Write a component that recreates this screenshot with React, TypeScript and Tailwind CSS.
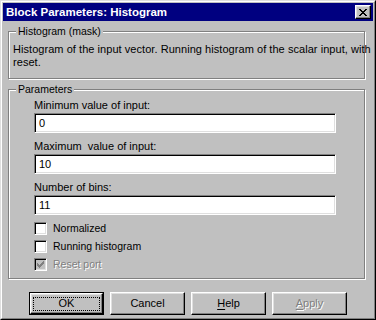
const font = "font-['Liberation_Sans',Arial,sans-serif]"

const sunken =
  'border border-t-[#808080] border-l-[#808080] border-b-white border-r-white shadow-[inset_1px_1px_0_#000,inset_-1px_-1px_0_#dfdfdf]'

const raised =
  'border border-t-white border-l-white border-b-black border-r-black shadow-[inset_-1px_-1px_0_#808080,inset_1px_1px_0_#dfdfdf]'

function Check({ color }: { color: string }) {
  return (
    <svg width="7" height="7" viewBox="0 0 7 7" shapeRendering="crispEdges" fill={color}>
      <path d="M6 0h1v3h-1zM5 1h1v3h-1zM4 2h1v3h-1zM3 3h1v3h-1zM2 4h1v3h-1zM1 3h1v3h-1zM0 2h1v3h-1z" />
    </svg>
  )
}

function GroupBox({ title, className, children }: { title: string; className: string; children: React.ReactNode }) {
  return (
    <div className={`relative ml-[5px] w-[357px] border border-[#808080] shadow-[inset_1px_1px_0_#fff,1px_1px_0_#fff] ${className}`}>
      <span className="absolute -top-[7px] left-[7px] bg-[#c0c0c0] px-[2px] text-[10.5px] leading-[13px]">{title}</span>
      {children}
    </div>
  )
}

function Field({ label, value, className }: { label: string; value: string; className: string }) {
  return (
    <div className={className}>
      <div className="whitespace-pre text-[11px] leading-[13px]">{label}</div>
      <div className={`mt-[1px] h-[20px] w-[302px] bg-white pl-[4px] text-[11px] leading-[18px] ${sunken}`}>{value}</div>
    </div>
  )
}

function CheckRow({ label, checked, disabled }: { label: string; checked?: boolean; disabled?: boolean }) {
  return (
    <div className="flex h-[18px] items-start gap-[6px] pt-[2px]">
      <div className={`flex h-[13px] w-[13px] items-center justify-center ${sunken} ${disabled ? 'bg-[#c0c0c0]' : 'bg-white'}`}>
        {checked && <Check color={disabled ? '#808080' : '#000'} />}
      </div>
      <span className={`text-[10.5px] leading-[13px] ${disabled ? 'text-[#808080] [text-shadow:1px_1px_0_#fff]' : ''}`}>{label}</span>
    </div>
  )
}

function Button({ children, disabled, isDefault }: { children: React.ReactNode; disabled?: boolean; isDefault?: boolean }) {
  const text = disabled ? 'text-[#808080] [text-shadow:1px_1px_0_#fff]' : 'text-black'
  if (isDefault) {
    return (
      <div className="h-[23px] w-[75px] border border-black">
        <div className={`flex h-full w-full items-center justify-center ${raised}`}>
          <div className="flex h-[14px] w-[67px] items-center justify-center border border-dotted border-black text-[11px]">{children}</div>
        </div>
      </div>
    )
  }
  return (
    <div className={`flex h-[23px] w-[75px] items-center justify-center text-[11px] ${raised} ${text}`}>{children}</div>
  )
}

export default function App() {
  return (
    <div className={`${font} h-[320px] w-[376px] border border-t-[#dfdfdf] border-l-[#dfdfdf] border-b-black border-r-black bg-[#c0c0c0] text-black`}>
      <div className="h-full w-full border border-t-white border-l-white border-b-[#808080] border-r-[#808080] p-[1px]">
        <div className="flex h-[18px] items-center justify-between bg-[#000080] pl-[3px] pr-[2px]">
          <span className="text-[11.5px] font-bold leading-[14px] text-white">Block Parameters: Histogram</span>
          <div className={`flex h-[14px] w-[16px] items-center justify-center bg-[#c0c0c0] ${raised}`}>
            <svg width="8" height="7" viewBox="0 0 8 7" shapeRendering="crispEdges" fill="#000">
              <path d="M0 0h2v1h-2zM6 0h2v1h-2zM1 1h2v1h-2zM5 1h2v1h-2zM2 2h4v1h-4zM3 3h2v1h-2zM2 4h4v1h-4zM1 5h2v1h-2zM5 5h2v1h-2zM0 6h2v1h-2zM6 6h2v1h-2z" />
            </svg>
          </div>
        </div>

        <GroupBox title="Histogram (mask)" className="mt-[10px] h-[48px]">
          <p className="whitespace-nowrap pl-[4px] pt-[11px] text-[11px] leading-[13px] tracking-[0.05px]">
            Histogram of the input vector. Running histogram of the scalar input, with
            <br />
            reset.
          </p>
        </GroupBox>

        <GroupBox title="Parameters" className="mt-[10px] h-[190px]">
          <div className="pl-[25px] pt-[9px]">
            <Field label="Minimum value of input:" value="0" className="" />
            <Field label="Maximum  value of input:" value="10" className="mt-[7px]" />
            <Field label="Number of bins:" value="11" className="mt-[7px]" />
            <div className="mt-[5px] flex flex-col">
              <CheckRow label="Normalized" />
              <CheckRow label="Running histogram" />
              <CheckRow label="Reset port" checked disabled />
            </div>
          </div>
        </GroupBox>

        <div className="mt-[13px] flex justify-center gap-[6px]">
          <Button isDefault>OK</Button>
          <Button>Cancel</Button>
          <Button>
            <span><u className="underline-offset-2">H</u>elp</span>
          </Button>
          <Button disabled>
            <span><u className="underline-offset-2">A</u>pply</span>
          </Button>
        </div>
      </div>
    </div>
  )
}
